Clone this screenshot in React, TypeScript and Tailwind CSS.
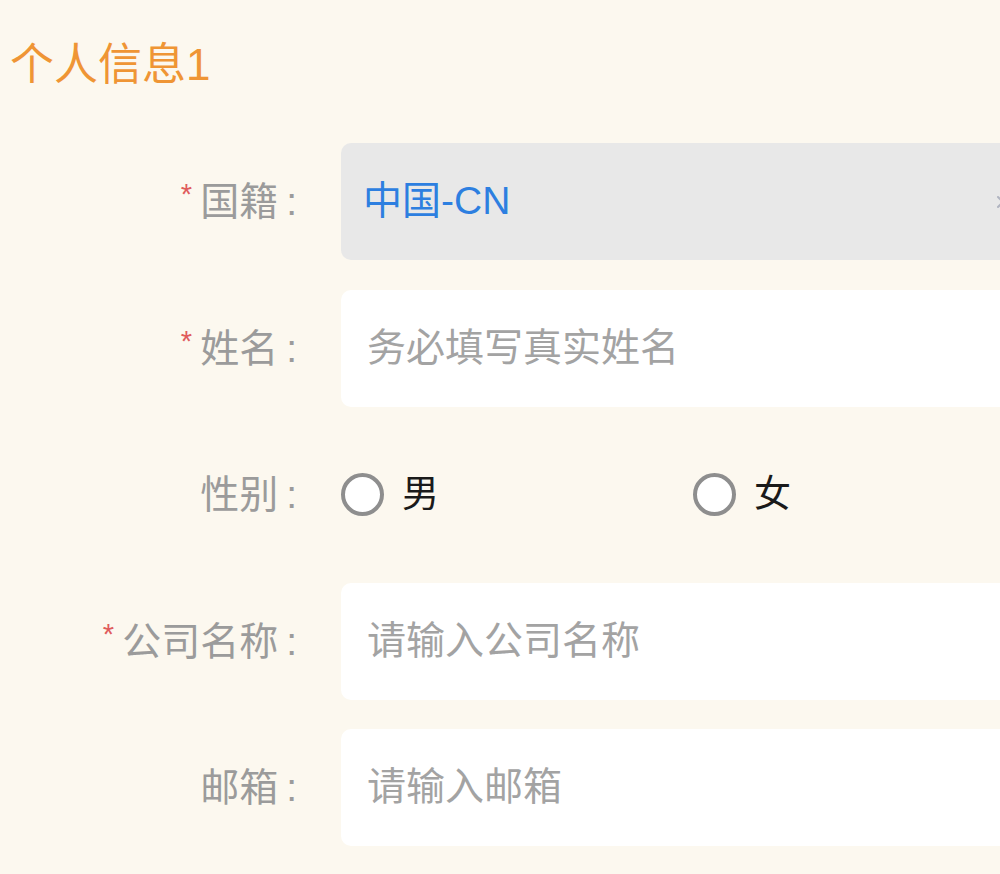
import React from "react";

const font = { fontFamily: '"Liberation Sans", "Noto Sans CJK SC", sans-serif' };

function Label({ text, required }: { text: string; required?: boolean }) {
  return (
    <div className="w-[297px] shrink-0 flex justify-end items-center text-[39px] leading-none text-[#9b9b9b]">
      {required && (
        <span className="text-[29px] text-[#e05c5c] mr-[8px] -mt-[14px]">*</span>
      )}
      <span>{text}</span>
      <span className="ml-[8px]">:</span>
    </div>
  );
}

function Input({ placeholder }: { placeholder: string }) {
  return (
    <div className="ml-[44px] w-[700px] shrink-0 h-full rounded-[10px] bg-white flex items-center pl-[26px] text-[39px] text-[#a3a3a3]">
      {placeholder}
    </div>
  );
}

function Radio({ text }: { text: string }) {
  return (
    <div className="w-[352px] shrink-0 flex items-center">
      <div className="w-[43px] h-[43px] rounded-full border-[4px] border-[#8e8e8e] bg-white" />
      <span className="ml-[18px] text-[37px] text-[#1a1a1a] leading-none">{text}</span>
    </div>
  );
}

export default function App() {
  return (
    <div className="w-[1000px] h-[874px] overflow-hidden bg-[#fcf8ef]" style={font}>
      <div className="pt-[38px] pl-[10px] text-[44px] leading-[54px] text-[#ef9535]">个人信息1</div>
      <div className="mt-[51px] flex flex-col gap-[29.5px]">
        <div className="flex items-center h-[117px]">
          <Label text="国籍" required />
          <div className="ml-[44px] w-[680px] shrink-0 h-full rounded-[10px] bg-[#e8e8e8] flex items-center pl-[22px] pr-[14px]">
            <span className="text-[39px] text-[#2d7fe0]">中国-CN</span>
            <svg className="ml-auto" width="14" height="20" viewBox="0 0 14 20" fill="none">
              <path d="M5 5 L10 10 L5 15" stroke="#b0b4c0" strokeWidth="2" strokeLinecap="round" strokeLinejoin="round" />
            </svg>
          </div>
        </div>
        <div className="flex items-center h-[117px]">
          <Label text="姓名" required />
          <Input placeholder="务必填写真实姓名" />
        </div>
        <div className="flex items-center h-[117px]">
          <Label text="性别" />
          <div className="ml-[44px] flex items-center">
            <Radio text="男" />
            <Radio text="女" />
          </div>
        </div>
        <div className="flex items-center h-[117px]">
          <Label text="公司名称" required />
          <Input placeholder="请输入公司名称" />
        </div>
        <div className="flex items-center h-[117px]">
          <Label text="邮箱" />
          <Input placeholder="请输入邮箱" />
        </div>
      </div>
    </div>
  );
}
